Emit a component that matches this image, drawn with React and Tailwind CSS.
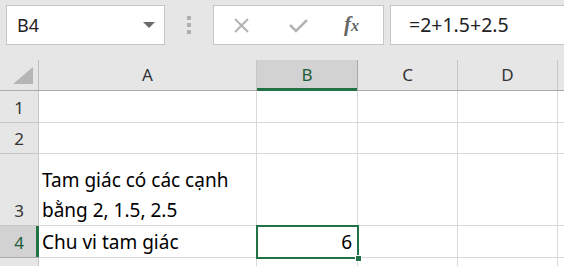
import React from "react";

const cols = [
  { key: "A", w: "w-[218px]" },
  { key: "B", w: "w-[101px]" },
  { key: "C", w: "w-[100px]" },
  { key: "D", w: "w-[100px]" },
];

const rows = [
  { n: "1", h: "h-[32px]" },
  { n: "2", h: "h-[31px]" },
  { n: "3", h: "h-[72px]", a: "Tam giác có các cạnh\nbằng 2, 1.5, 2.5" },
  { n: "4", h: "h-[32px]", a: "Chu vi tam giác", b: "6", active: true },
  { n: "", h: "h-[40px]" },
];

const font = { fontFamily: "'Noto Sans', 'Liberation Sans', sans-serif" };

export default function App() {
  return (
    <div className="w-[564px] h-[266px] overflow-hidden bg-white" style={font}>
      {/* Formula bar */}
      <div className="h-[60px] bg-[#e6e6e6] flex items-start pt-[5px] pl-[6px]">
        <div className="w-[159px] h-[40px] bg-white border border-[#c6c6c6] flex items-center justify-between pl-[10px] pr-[9px]">
          <span className="text-[18px] text-[#222]">B4</span>
          <svg width="12" height="6" viewBox="0 0 12 6">
            <path d="M0 0 L12 0 L6 6 Z" fill="#6b6b6b" />
          </svg>
        </div>
        <div className="w-[48px] h-[40px] flex flex-col items-center justify-center gap-[3px]">
          <span className="w-[4px] h-[4px] bg-[#b0b0b0]" />
          <span className="w-[4px] h-[4px] bg-[#b0b0b0]" />
          <span className="w-[4px] h-[4px] bg-[#b0b0b0]" />
        </div>
        <div className="w-[171px] h-[40px] bg-white border border-[#c6c6c6] flex items-center">
          <svg className="ml-[19px]" width="17" height="15" viewBox="0 0 17 15">
            <path d="M2 1 L15 14 M15 1 L2 14" stroke="#b4b4b4" strokeWidth="2" fill="none" />
          </svg>
          <svg className="ml-[39px]" width="19" height="15" viewBox="0 0 19 15">
            <path d="M1 7 L7 13 L18 2" stroke="#b4b4b4" strokeWidth="2.5" fill="none" />
          </svg>
          <span
            className="ml-[36px] text-[21px] italic font-bold text-[#666]"
            style={{ fontFamily: "'Liberation Serif', serif" }}
          >
            f<span className="text-[16px]">x</span>
          </span>
        </div>
        <div className="ml-[6px] flex-1 h-[40px] bg-white border border-r-0 border-[#c6c6c6] flex items-center pl-[18px]">
          <span className="text-[19.5px] text-[#222]">=2+1.5+2.5</span>
        </div>
      </div>

      {/* Grid */}
      <div className="relative">
        <div className="flex h-[31px] bg-[#e6e6e6] border-b border-[#ababab]">
          <div className="w-[39px] border-r border-[#bdbdbd] flex items-end justify-end pr-[5px] pb-[6px]">
            <svg width="20" height="17" viewBox="0 0 20 17">
              <path d="M20 0 L20 17 L0 17 Z" fill="#b5b5b5" />
            </svg>
          </div>
          {cols.map((c) => (
            <div
              key={c.key}
              className={`${c.w} relative border-r flex items-center justify-center text-[17px] ${
                c.key === "B"
                  ? "bg-[#d2d2d2] border-[#a9a9a9] text-[#1e5c3a]"
                  : "border-[#c6c6c6] text-[#333]"
              }`}
            >
              {c.key}
              {c.key === "B" && (
                <span className="absolute left-0 right-0 -bottom-px h-[3px] bg-[#217346]" />
              )}
            </div>
          ))}
          <div className="flex-1" />
        </div>

        {rows.map((r, i) => (
          <div key={i} className={`flex ${r.h}`}>
            <div
              className={`w-[39px] border-b border-r flex items-end justify-center pb-[2px] text-[17px] relative ${
                r.active
                  ? "bg-[#d2d2d2] text-[#1e5c3a] border-[#ababab]"
                  : "bg-[#e6e6e6] text-[#333] border-[#c6c6c6]"
              }`}
            >
              {r.n}
              {r.active && (
                <span className="absolute top-0 bottom-0 -right-px w-[3px] bg-[#217346]" />
              )}
            </div>
            <div className="w-[218px] border-b border-r border-[#d9d9d9] flex items-end pl-[3px] text-[19px] leading-[30px] text-black whitespace-pre-line">
              {r.a}
            </div>
            <div className="w-[101px] border-b border-r border-[#d9d9d9] flex items-end justify-end pr-[5px] text-[19px] leading-[30px] text-black">
              {r.b}
            </div>
            <div className="w-[100px] border-b border-r border-[#d9d9d9]" />
            <div className="w-[100px] border-b border-r border-[#d9d9d9]" />
            <div className="flex-1 border-b border-[#d9d9d9]" />
          </div>
        ))}

        {/* Active cell B4 */}
        <div className="absolute left-[256px] top-[165px] w-[103px] h-[34px] border-2 border-[#217346] pointer-events-none">
          <span className="absolute -right-[5px] -bottom-[5px] w-[7px] h-[7px] bg-[#217346] border border-white" />
        </div>
      </div>
    </div>
  );
}
